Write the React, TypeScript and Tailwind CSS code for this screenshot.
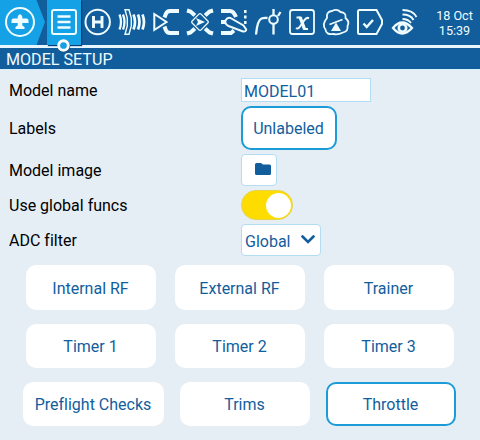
import type { ReactNode } from "react";

function NavIcon({ x, children }: { x: number; children: ReactNode }) {
  return (
    <svg
      className="block h-[45px] w-[34px] shrink-0"
      viewBox={`${x} 0 34 45`}
      fill="none"
      stroke="#eefcff"
      strokeWidth="2"
    >
      {children}
    </svg>
  );
}

function Header() {
  return (
    <header className="relative flex h-[48px] shrink-0 border-b-[3px] border-[#e8f7ff] bg-[#125e9d]">
      <svg className="block h-[45px] w-[47px] shrink-0" viewBox="0 0 47 45" fill="none">
        <path d="M0 0H36.500L45 22L36.500 45H0Z" fill="#14a1e5" />
        <circle cx="20" cy="22" r="14" stroke="#eefcff" strokeWidth="2" />
        <path
          d="M17.700 16.500Q20 12 22.300 16.500V18.500H26.500Q28.500 18.500 28.500 20.500V23H22.300V25.500L24.500 27V29H15.500V27L17.700 25.500V23H11.500V20.500Q11.500 18.500 13.500 18.500H17.700Z"
          fill="#eefcff"
        />
      </svg>
      <div className="h-[45px] w-[34px] shrink-0 bg-[#14a1e5] shadow-[1px_1px_1px_#0b3f70]">
        <NavIcon x={47}>
          <rect x="52" y="10" width="24" height="24" rx="2" />
          <path d="M57.500 16.500H70.500M57.500 22H70.500M57.500 27.500H70.500" strokeWidth="2.400" />
        </NavIcon>
      </div>
      <NavIcon x={81}>
        <circle cx="97.700" cy="22" r="12.200" />
        <path d="M93.500 16V28M102 16V28M93.500 22H102" strokeWidth="2.900" />
      </NavIcon>
      <NavIcon x={115}>
        <path d="M119.500 14.500Q122.500 22 119.500 29.500M123 14.500Q126 22 123 29.500" strokeWidth="2.300" />
        <path d="M125 9.700H129L131.300 18V26L129 34.300H125L127.300 26V18Z" strokeWidth="1.400" />
        <path d="M133.500 14.500Q136.500 22 133.500 29.500M138 14.500Q141 22 138 29.500M142.500 14.500Q145.500 22 142.500 29.500" strokeWidth="2.700" />
      </NavIcon>
      <NavIcon x={149}>
        <path d="M154.300 14V30L166.500 22Z" />
        <path d="M179 11H170Q167 11 165.800 14L164.500 17.500M179 33H170Q167 33 165.800 30L164.500 26.500" strokeWidth="4" />
      </NavIcon>
      <NavIcon x={183}>
        <path d="M187 10.500L190.500 11.500L195 15.500M213 10.500L209.500 11.500L205 15.500M187 33.500L190.500 32.500L195 28.500M213 33.500L209.500 32.500L205 28.500" strokeWidth="4" />
        <rect x="193.500" y="15.500" width="13" height="13" rx="1.500" transform="rotate(45 200 22)" fill="#125e9d" stroke="#125e9d" strokeWidth="3.500" />
        <rect x="193.700" y="15.700" width="12.600" height="12.600" rx="1.500" transform="rotate(45 200 22)" strokeWidth="1.300" />
        <path d="M196 18L205 22L196 26L198 22Z" fill="#eefcff" stroke="none" />
      </NavIcon>
      <NavIcon x={217}>
        <path d="M221 11H230Q233.500 11 236 17M221 33H231L234 30.500" strokeWidth="4" />
        <path d="M221 22H226" strokeWidth="4" />
        <path d="M230.500 18L243.500 25.500L246.200 29.500Q246 32 243 31.500L228.500 26Q224.500 24 225.500 20.500Q227.500 17 230.500 18Z" fill="#125e9d" strokeWidth="2" />
        <path d="M245.300 10V24" strokeWidth="2.500" strokeDasharray="3 2.500" />
      </NavIcon>
      <NavIcon x={251}>
        <path d="M256 34.500Q257.500 20 261.500 18.500Q264 17.500 267.500 18M273.500 9V15M273.500 24V34.500M278 16L280.500 12" strokeWidth="2.300" />
        <circle cx="273.500" cy="19.500" r="4.300" strokeWidth="2" />
      </NavIcon>
      <NavIcon x={285}>
        <rect x="290" y="10" width="24" height="24" rx="2.500" strokeWidth="1.800" />
        <path d="M296.500 17.500H300L304.500 29H308M296 28Q298 29.500 300 26.500L304.500 20Q306.500 17 309 18.300" strokeWidth="2" />
        <path d="M298.300 16.700H301.700L306.500 29.800H303Z" fill="#eefcff" stroke="none" />
      </NavIcon>
      <NavIcon x={319}>
        <path d="M327 18Q326 11.500 332 11Q337 8.500 340.500 12Q346.500 12.500 345.500 18Q350 22 347.500 26Q348.500 31 343 32.500Q338 35 333.500 34Q326 35 325.500 29.500Q321.500 24.500 327 18Z" strokeWidth="1.800" />
        <path d="M329.500 24.500L342.500 19.500" strokeWidth="1.700" />
        <path d="M336 22.500L341 31H331Z" fill="#eefcff" stroke="none" />
      </NavIcon>
      <NavIcon x={353}>
        <path d="M359.500 10H376.500L382 20V24L376.500 34H359.500Q358 34 358 32.500V11.500Q358 10 359.500 10Z" />
        <path d="M363.500 23.500L366.700 27L373 20" strokeWidth="2.500" />
      </NavIcon>
      <NavIcon x={387}>
        <path d="M393 28Q402 17 412 28Q402 39 393 28Z" strokeWidth="2.300" />
        <circle cx="402.500" cy="28" r="3.700" strokeWidth="2.600" />
        <path d="M402.500 19Q408 19 411 23M402.500 14.500Q410.500 14.500 413.500 20M402.500 10Q413 10 416.500 17" strokeWidth="1.900" />
      </NavIcon>
      <div className="ml-[8px] flex h-[45px] w-[51px] shrink-0 flex-col items-center pt-[9px] text-[12.600px] leading-[14.500px] text-[#eefcff]">
        <span className="whitespace-nowrap">18 Oct</span>
        <span>15:39</span>
      </div>
      <svg className="absolute left-[55px] top-[37px] z-10 h-[17px] w-[17px]" viewBox="0 0 17 17" fill="none">
        <circle cx="9" cy="9.300" r="6.200" fill="#0b3f70" />
        <circle cx="8.500" cy="8.500" r="4.800" fill="#14a1e5" stroke="#fff" strokeWidth="2.900" />
      </svg>
    </header>
  );
}

function ModuleButton({ label, className }: { label: string; className: string }) {
  return (
    <button className={`flex items-center justify-center whitespace-nowrap rounded-[10px] bg-white pr-px pt-[2px] ${className}`}>
      {label}
    </button>
  );
}

const rowLabel = "w-[232px] shrink-0 pt-[2px] text-black";

export default function App() {
  return (
    <div className="flex h-[440px] w-[480px] flex-col overflow-hidden bg-[#e5edf5] font-['Roboto',sans-serif] text-[16px] leading-[20px] text-[#125e9d] [font-variant-ligatures:none]">
      <Header />
      <div className="flex h-[22px] shrink-0 items-center border-b border-[#d8efff] bg-[#125e9d] pl-[6px] pt-[2px] text-[16.100px] text-[#eefcff]">
        MODEL SETUP
      </div>
      <div className="flex flex-col pl-[9px] pt-[8px]">
        <div className="flex h-[24px] items-center">
          <span className={rowLabel}>Model name</span>
          <div className="flex h-[24px] w-[130px] items-center border border-[#b4dcf2] bg-white pl-[2px] pt-[4px]">MODEL01</div>
        </div>
        <div className="mt-[4px] flex h-[44px] items-center">
          <span className={rowLabel}>Labels</span>
          <button className="h-[44px] w-[96px] rounded-[10px] border-2 border-[#1b9cd8] bg-white pr-px pt-[2px]">Unlabeled</button>
        </div>
        <div className="mt-[4px] flex h-[32px] items-center">
          <span className={rowLabel}>Model image</span>
          <button className="flex h-[32px] w-[36px] items-center rounded-[4px] border border-[#b4dcf2] bg-white pb-[2px] pl-[13px]">
            <svg className="h-[13px] w-[17px]" viewBox="0 0 17 13" fill="#125e9d">
              <path d="M1.500 0H6L8 1.500H14.500Q16 1.500 16 3V10.500Q16 12 14.500 12H1.500Q0 12 0 10.500V1.500Q0 0 1.500 0Z" />
            </svg>
          </button>
        </div>
        <div className="mt-[4px] flex h-[30px] items-center">
          <span className={rowLabel}>Use global funcs</span>
          <div className="flex h-[30px] w-[52px] items-center justify-end rounded-full border border-[#e5d44c] bg-[#ffdc00] pr-[1px]">
            <div className="h-[25px] w-[25px] rounded-full bg-white" />
          </div>
        </div>
        <div className="mt-[4px] flex h-[32px] items-center">
          <span className={rowLabel}>ADC filter</span>
          <div className="flex h-[32px] w-[80px] items-center justify-between rounded-[4px] border border-[#b4dcf2] bg-white pl-[3px] pr-[5px]">
            <span className="pt-[4px]">Global</span>
            <svg className="mb-[2px] h-[9px] w-[14px]" viewBox="0 0 14 9" fill="none">
              <path d="M1.500 1.500L7 7L12.500 1.500" stroke="#125e9d" strokeWidth="2.600" strokeLinecap="round" />
            </svg>
          </div>
        </div>
      </div>
      <div className="flex flex-col gap-[14px] pt-[9px]">
        <div className="flex h-[45px] gap-[19px] pl-[26px]">
          <ModuleButton label="Internal RF" className="w-[130px]" />
          <ModuleButton label="External RF" className="w-[130px]" />
          <ModuleButton label="Trainer" className="w-[130px]" />
        </div>
        <div className="flex h-[44px] gap-[19px] pl-[26px]">
          <ModuleButton label="Timer 1" className="w-[130px]" />
          <ModuleButton label="Timer 2" className="w-[130px]" />
          <ModuleButton label="Timer 3" className="w-[130px]" />
        </div>
        <div className="flex h-[44px] gap-[16px] pl-[23px]">
          <ModuleButton label="Preflight Checks" className="w-[141px]" />
          <ModuleButton label="Trims" className="w-[130px]" />
          <ModuleButton label="Throttle" className="w-[130px] border-2 border-[#1b9cd8]" />
        </div>
      </div>
    </div>
  );
}
